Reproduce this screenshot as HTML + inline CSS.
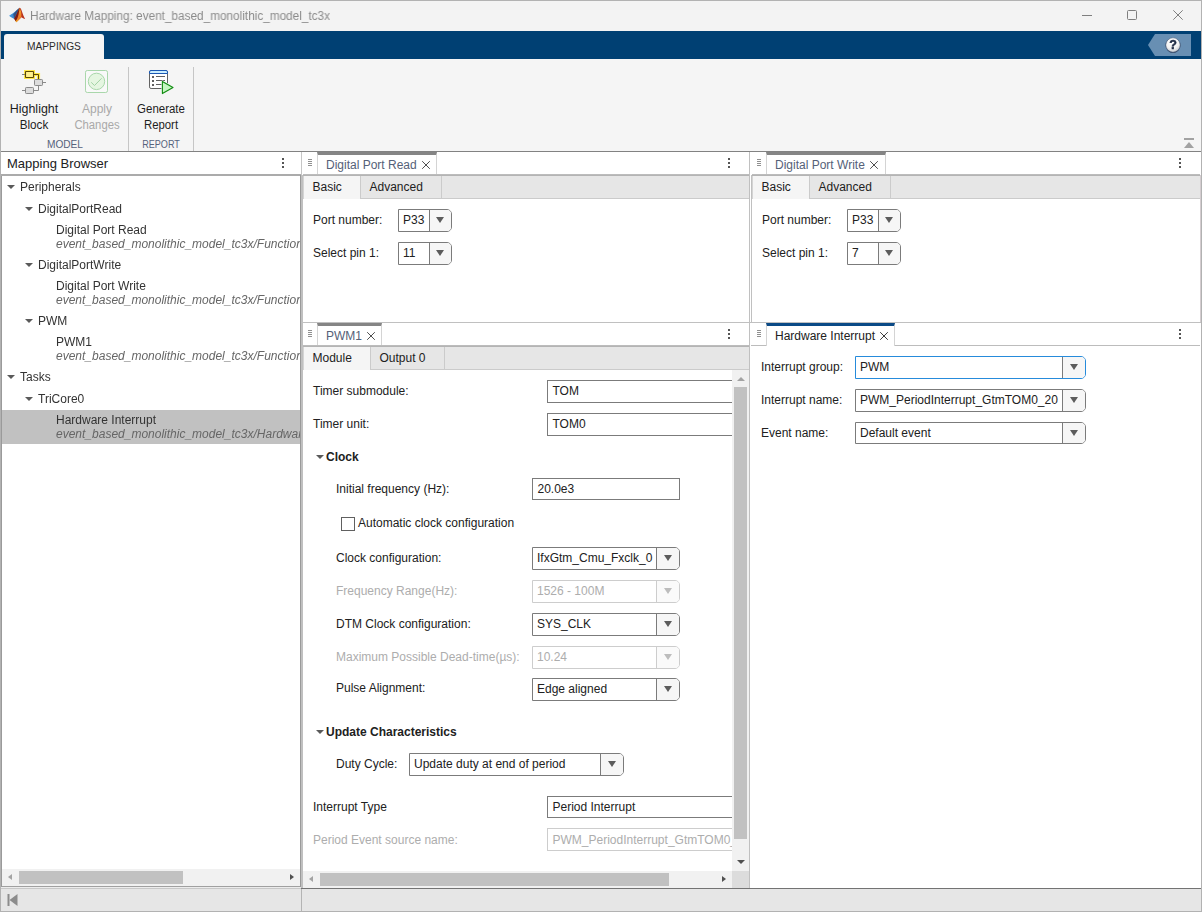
<!DOCTYPE html>
<html lang="en">
<head>
<meta charset="utf-8">
<title>Hardware Mapping: event_based_monolithic_model_tc3x</title>
<style>
*{box-sizing:border-box;margin:0;padding:0}
html,body{width:1202px;height:912px;overflow:hidden;background:#f3f3f3}
body{position:relative;font-family:"Liberation Sans",sans-serif;font-size:12px;color:#212121}
.a{position:absolute}
.t{position:absolute;white-space:nowrap;line-height:14px;font-size:12px}
.b{font-weight:bold}
#win{position:absolute;left:0;top:0;width:1202px;height:912px;border:1px solid #b2b2b2}
#blue{position:absolute;left:1px;top:31px;width:1200px;height:28px;background:#004073}
#maptab{position:absolute;left:4px;top:34px;width:100px;height:25px;background:#f5f5f5;border-radius:3px 3px 0 0}
#strip{position:absolute;left:1px;top:59px;width:1200px;height:92px;background:#f5f5f5}
#stripline{position:absolute;left:1px;top:151px;width:1200px;height:1px;background:#828282}
.vsep{position:absolute;width:1px;background:#c6c6c6;top:67px;height:84px}
.tl{position:absolute;white-space:nowrap;font-size:12px;line-height:16px;text-align:center;color:#1e1e1e}
.sec{position:absolute;white-space:nowrap;font-size:11px;line-height:14px;color:#56627c}
.tree .t{color:#333}
.tree .s{color:#666;font-style:italic}
.arr{position:absolute;width:0;height:0;border-left:4px solid transparent;border-right:4px solid transparent;border-top:4px solid #5a5a5a}
.combo{position:absolute;height:23px;border:1px solid #7b7b7b;border-radius:0 5px 5px 0;background:#fff;overflow:hidden}
.combo .btn{position:absolute;right:0;top:0;bottom:0;width:23px;background:#f6f6f6;border-left:1px solid #7b7b7b}
.combo .btn:after{content:"";position:absolute;right:7px;top:7px;border-left:4px solid transparent;border-right:4px solid transparent;border-top:6px solid #5c5c5c}
.combo.n .btn{width:22px}
.combo .v{position:absolute;left:4px;top:3px;line-height:14px;font-size:12px;white-space:nowrap;color:#212121}
.combo.dis{border-color:#cdcdcd}
.combo.dis .btn{border-left-color:#cdcdcd;background:#fafafa}
.combo.dis .btn:after{border-top-color:#bdbdbd}
.combo.dis .v{color:#adadad}
.combo.foc{border-color:#268bdb}
.edit{position:absolute;height:23px;border:1px solid #7b7b7b;background:#fff;overflow:hidden}
.edit .v{position:absolute;left:4.5px;top:3px;line-height:14px;font-size:12px;white-space:nowrap;color:#212121}
.edit.dis{border-color:#cdcdcd}
.edit.dis .v{color:#adadad}
.g{color:#adadad}
.kebab{position:absolute;width:2px;height:2px;background:#555;box-shadow:0 4px 0 #555,0 8px 0 #555}
.grip{position:absolute;width:4px;height:1px;background:#909090;box-shadow:0 2px 0 #909090,0 4px 0 #909090,0 6px 0 #909090}
.hdr{position:absolute;height:24px;background:#fff;border-bottom:1px solid #b4b4b4}
.dtab{position:absolute;background:#fff;border-left:1px solid #d4d4d4;border-right:1px solid #d4d4d4;border-top:3px solid #858585}
.dtab.act{border-top-color:#0b4a86}
.dtab .t{color:#556178;font-size:12px;top:3px;line-height:14px}
.dtab.act .t{color:#212121}
.x{position:absolute;width:8px;height:8px}
.subbar{position:absolute;height:23px;background:#e6e6e6;border-bottom:1px solid #cbcbcb}
.subtab{position:absolute;top:0;height:23px;border-right:1px solid #cbcbcb;font-size:12px;line-height:14px;white-space:nowrap;color:#212121}
.subtab span{position:absolute;top:4px}
.subtab.on{background:#f5f5f5}
.panel{position:absolute;background:#fff}
.sbt{position:absolute;background:#f1f1f1}
.sbh{position:absolute;background:#c1c1c1}
</style>
</head>
<body>
<div id="win"></div>
<svg class="a" style="left:4px;top:2px" width="30" height="26" viewBox="4 2 30 26">
<defs>
<linearGradient id="lgb" x1="0" y1="0" x2="1" y2="0"><stop offset="0" stop-color="#4a9be0"/><stop offset=".6" stop-color="#2f7fc6"/><stop offset="1" stop-color="#26466f"/></linearGradient>
<linearGradient id="lgo" x1="0" y1="0" x2="0" y2="1"><stop offset="0" stop-color="#c8501c"/><stop offset=".25" stop-color="#f0962a"/><stop offset=".7" stop-color="#ee7a2a"/><stop offset="1" stop-color="#f7b61c"/></linearGradient>
</defs>
<path d="M9.1 15.7 C11.6 14.4 14.2 12.5 17.6 9.3 L19.2 8 L17.8 14 L14.3 18.9 C12.5 18.2 10.7 16.9 9.1 15.7 Z" fill="url(#lgb)"/>
<path d="M14.2 18.8 C15.6 16.5 17.6 12.5 19.4 7.9 C20.1 7.5 20.9 8.6 21.6 10.5 C22.2 12.2 22.7 14 23.4 15.6 C23.9 16.9 24.5 18 25.1 18.9 C23.8 18.7 22.4 17.8 21.3 17.2 C19.9 18.6 18 20.7 16.4 22.3 C15.7 21.3 15 20 14.2 18.8 Z" fill="#b8321d"/>
<path d="M19.4 7.9 C20.2 8 20.9 10 21.2 12.5 C21.4 14.4 21.4 16 21.3 17.2 C19.9 18.6 18 20.7 16.4 22.3 L15.2 20.4 C17 17 18.5 12.3 19.4 7.9 Z" fill="url(#lgo)"/>
<path d="M14.2 18.8 C15.6 16.5 17.5 12.6 19.2 8.2 C19.5 12 18.2 17.4 15.8 21.3 Z" fill="#7d1c13"/>
<path d="M13.2 14.2 L17.6 9.6 L15.6 15.5 L14.4 18.6 Z" fill="#3a2a4a" opacity=".55"/>
</svg>
<div class="t " id="title" style="left:30px;top:9px;color:#8b8b8b;transform-origin:0 50%;transform:scaleX(.982);will-change:transform;">Hardware Mapping: event_based_monolithic_model_tc3x</div>
<svg class="a" style="left:1075px;top:5px" width="120" height="22" viewBox="0 0 120 22" fill="none" stroke="#7f7f7f" stroke-width="1">
<path d="M7 10.5 H17"/>
<rect x="52.5" y="5.5" width="9" height="9" rx="1"/>
<path d="M98.3 5.3 L107.7 14.7 M107.7 5.3 L98.3 14.7"/>
</svg>
<div id="blue"></div><div id="maptab"></div>
<div class="t " id="maptxt" style="left:27px;top:40px;font-size:11px;line-height:13px;color:#2b2b2b;transform-origin:0 50%;transform:scaleX(.928);">MAPPINGS</div>
<svg class="a" style="left:1147px;top:33px;will-change:transform" width="46" height="24" viewBox="0 0 46 24">
<defs><radialGradient id="hg" cx="45%" cy="30%" r="75%"><stop offset="0" stop-color="#ffffff"/><stop offset=".6" stop-color="#f2f2f2"/><stop offset="1" stop-color="#b9bec6"/></radialGradient></defs>
<path d="M1 12 L8 1 H44 V23 H8 Z" fill="#688fb3"/>
<circle cx="26" cy="12.5" r="7.5" fill="#2c405f"/>
<circle cx="26" cy="12" r="7.2" fill="url(#hg)" stroke="#4a5f7c" stroke-width=".5"/>
<text x="26" y="16.3" text-anchor="middle" font-family="Liberation Sans, sans-serif" font-weight="bold" font-size="12.5" fill="#1d2a44" stroke="#1d2a44" stroke-width=".5">?</text>
</svg>
<div id="strip"></div><div id="stripline"></div>
<div class="vsep" style="left:128px"></div><div class="vsep" style="left:193px"></div>
<svg class="a" style="left:20px;top:68px" width="28" height="28" viewBox="20 68 28 28" fill="none">
<rect x="24" y="70" width="11" height="9" fill="#ffe84a"/>
<path d="M34 74.5 H38.5 V79" stroke="#ffe84a" stroke-width="3.2"/>
<path d="M22 74.5 H25" stroke="#808080"/>
<path d="M34 74.5 H38.5 V79.5" stroke="#5c4700"/>
<rect x="25.5" y="71.5" width="8" height="6" rx=".6" fill="#fff08c" stroke="#5c4700" stroke-width="1.1"/>
<path d="M43 82.5 H46 M22 90.5 H25 M34 90.5 H38.5 V86" stroke="#8a8a8a"/>
<rect x="34.5" y="79.5" width="8" height="6" rx=".8" fill="#dcdcdc" stroke="#8a8a8a"/>
<rect x="25.5" y="87.5" width="8" height="6" rx=".8" fill="#dcdcdc" stroke="#8a8a8a"/>
</svg>
<svg class="a" style="left:84px;top:69px" width="26" height="26" viewBox="84 69 26 26" fill="none">
<rect x="85.5" y="70.5" width="22" height="22" rx="1.8" fill="#f9f9f9" stroke="#a9d7ab"/>
<circle cx="96.5" cy="81.4" r="8.2" fill="#e5f6e1" stroke="#a9d7ab"/>
<path d="M91.2 82.3 L94.5 85.5 L101.6 78.3" stroke="#a3d3a5" stroke-width="1"/>
</svg>
<svg class="a" style="left:147px;top:68px" width="30" height="28" viewBox="147 68 30 28" fill="none">
<rect x="149.5" y="70.5" width="18" height="18" rx="1.6" fill="#fff" stroke="#626262"/>
<path d="M149.5 73.5 V72 Q149.5 70.5 151 70.5 H166 Q167.5 70.5 167.5 72 V73.5 Z" fill="#c9edff" stroke="#1b58b3"/>
<path d="M152 77 H154 M152 81 H154 M152 85 H154" stroke="#606060" stroke-width="2"/>
<path d="M156 76.5 H165 M156 80.5 H165 M156 84.5 H162" stroke="#606060"/>
<path d="M162.4 81.4 L173 87.5 L162.4 93.6 Z" fill="#c6f6c2" stroke="#f5f5f5" stroke-width="2" stroke-linejoin="round"/>
<path d="M162.4 81.4 L173 87.5 L162.4 93.6 Z" fill="#c6f6c2" stroke="#118c11" stroke-width="1.1" stroke-linejoin="round"/>
</svg>
<div class="tl" id="tl1" style="left:-6px;width:80px;top:101px;color:#1e1e1e;transform:scaleX(1.038)">Highlight</div>
<div class="tl" id="tl2" style="left:-6px;width:80px;top:117px;color:#1e1e1e;transform:scaleX(0.976)">Block</div>
<div class="tl" id="tl3" style="left:57px;width:80px;top:101px;color:#a9a9a9;transform:scaleX(1.0)">Apply</div>
<div class="tl" id="tl4" style="left:57px;width:80px;top:117px;color:#a9a9a9;transform:scaleX(0.94)">Changes</div>
<div class="tl" id="tl5" style="left:121px;width:80px;top:101px;color:#1e1e1e;transform:scaleX(0.954)">Generate</div>
<div class="tl" id="tl6" style="left:121px;width:80px;top:117px;color:#1e1e1e;transform:scaleX(0.946)">Report</div>
<div class="sec" id="sec1" style="left:24.5px;width:80px;text-align:center;top:137px;transform:scaleX(.92)">MODEL</div>
<div class="sec" id="sec2" style="left:121px;width:80px;text-align:center;top:137px;transform:scaleX(.826)">REPORT</div>
<svg class="a" style="left:1182px;top:137px" width="13" height="12" viewBox="0 0 13 12"><rect x="2" y="1" width="10" height="2" fill="#a2a2a2"/><path d="M7 5 L12 11 H2 Z" fill="#a2a2a2"/></svg>
<!--PANELS-->
<div class="a" style="left:1px;top:152px;width:1200px;height:736px;background:#fff;"></div>
<div class="t " id="mb" style="left:7px;top:156px;font-size:13px;line-height:15px;color:#212121;">Mapping Browser</div>
<div class="kebab" style="left:282px;top:158px"></div>
<div class="a" style="left:1px;top:174px;width:300px;height:2px;background:#ababab;"></div>
<div class="a" style="left:1px;top:176px;width:1px;height:711px;background:#9a9a9a;"></div>
<div class="tree">
<div class="a" style="left:2px;top:176px;width:298px;height:693px;overflow:hidden;will-change:transform">
<div class="t" style="left:18px;top:4px">Peripherals</div>
<div class="arr" style="left:5px;top:9px"></div>
<div class="t" style="left:36px;top:26px">DigitalPortRead</div>
<div class="arr" style="left:23px;top:31px"></div>
<div class="t" style="left:54px;top:47px">Digital Port Read</div>
<div class="t s" style="left:54px;top:61px">event_based_monolithic_model_tc3x/Function-Call Subsystem/Digital Port Read</div>
<div class="t" style="left:36px;top:82px">DigitalPortWrite</div>
<div class="arr" style="left:23px;top:87px"></div>
<div class="t" style="left:54px;top:103px">Digital Port Write</div>
<div class="t s" style="left:54px;top:117px">event_based_monolithic_model_tc3x/Function-Call Subsystem/Digital Port Write</div>
<div class="t" style="left:36px;top:138px">PWM</div>
<div class="arr" style="left:23px;top:143px"></div>
<div class="t" style="left:54px;top:159px">PWM1</div>
<div class="t s" style="left:54px;top:173px">event_based_monolithic_model_tc3x/Function-Call Subsystem/PWM1</div>
<div class="t" style="left:18px;top:194px">Tasks</div>
<div class="arr" style="left:5px;top:199px"></div>
<div class="t" style="left:36px;top:216px">TriCore0</div>
<div class="arr" style="left:23px;top:221px"></div>
<div class="a" style="left:0;top:234px;width:298px;height:34px;background:#c1c1c1"></div>
<div class="t" style="left:54px;top:237px">Hardware Interrupt</div>
<div class="t s" style="left:54px;top:251px">event_based_monolithic_model_tc3x/Hardware Interrupt</div>
</div></div>
<div class="a" style="left:2px;top:869px;width:298px;height:17px;background:#f1f1f1;"></div>
<div class="a" style="left:19px;top:871px;width:164px;height:13px;background:#c1c1c1;"></div>
<div class="a" style="left:8px;top:874px;border-top:3.5px solid transparent;border-bottom:3.5px solid transparent;border-right:4px solid #a3a3a3"></div>
<div class="a" style="left:290px;top:874px;border-top:3.5px solid transparent;border-bottom:3.5px solid transparent;border-left:4px solid #505050"></div>
<div class="a" style="left:300px;top:175px;width:1px;height:712px;background:#9a9a9a;"></div>
<div class="a" style="left:301px;top:152px;width:1px;height:23px;background:#c6c6c6;"></div>
<div class="a" style="left:301px;top:175px;width:2px;height:713px;background:#c0c0c0;"></div>
<div class="a" style="left:303px;top:174px;width:446px;height:1px;background:#bcbcbc;"></div>
<div class="a" style="left:303px;top:175px;width:446px;height:1px;background:#b4b4b4;"></div>
<div class="grip" style="left:308px;top:159px"></div>
<div class="dtab" style="left:317px;top:152px;width:120px;height:22px"><div class="t" id="dt1" style="left:8px">Digital Port Read</div></div>
<svg class="x" style="left:422px;top:161px" viewBox="0 0 8 8"><path d="M.2 .2 L7.8 7.8 M7.8 .2 L.2 7.8" stroke="#4f4f4f" stroke-width="1" fill="none"/></svg>
<div class="kebab" style="left:728px;top:158px"></div>
<div class="a" style="left:303px;top:176px;width:1px;height:23px;background:#d4d4d4;"></div>
<div class="subbar" style="left:304px;top:176px;width:445px">
<div class="subtab on" style="left:0px;width:57px"><span style="left:8.5px">Basic</span></div>
<div class="subtab" style="left:57px;width:81px"><span style="left:8.5px">Advanced</span></div>
</div>
<div class="t " style="left:313px;top:213px;">Port number:</div>
<div class="combo n" style="left:398px;top:209px;width:54px;height:23px"><div class="v">P33</div><div class="btn"></div></div>
<div class="t " style="left:313px;top:246px;">Select pin 1:</div>
<div class="combo n" style="left:398px;top:242px;width:54px;height:23px"><div class="v">11</div><div class="btn"></div></div>
<div class="a" style="left:749px;top:152px;width:1px;height:736px;background:#c0c0c0;"></div>
<div class="a" style="left:751px;top:175px;width:1px;height:147px;background:#c0c0c0;"></div>
<div class="a" style="left:1200px;top:175px;width:1px;height:147px;background:#d4cdd0;"></div>
<div class="a" style="left:303px;top:322px;width:898px;height:1px;background:#c0c0c0;"></div>
<div class="a" style="left:752px;top:174px;width:448px;height:1px;background:#bcbcbc;"></div>
<div class="a" style="left:752px;top:175px;width:448px;height:1px;background:#b4b4b4;"></div>
<div class="grip" style="left:757px;top:159px"></div>
<div class="dtab" style="left:766px;top:152px;width:120px;height:22px"><div class="t" id="dt2" style="left:8px">Digital Port Write</div></div>
<svg class="x" style="left:870px;top:161px" viewBox="0 0 8 8"><path d="M.2 .2 L7.8 7.8 M7.8 .2 L.2 7.8" stroke="#4f4f4f" stroke-width="1" fill="none"/></svg>
<div class="kebab" style="left:1179px;top:158px"></div>
<div class="a" style="left:752px;top:176px;width:1px;height:23px;background:#d4d4d4;"></div>
<div class="subbar" style="left:753px;top:176px;width:447px">
<div class="subtab on" style="left:0px;width:57px"><span style="left:8.5px">Basic</span></div>
<div class="subtab" style="left:57px;width:81px"><span style="left:8.5px">Advanced</span></div>
</div>
<div class="t " style="left:762px;top:213px;">Port number:</div>
<div class="combo n" style="left:847px;top:209px;width:54px;height:23px"><div class="v">P33</div><div class="btn"></div></div>
<div class="t " style="left:762px;top:246px;">Select pin 1:</div>
<div class="combo n" style="left:847px;top:242px;width:54px;height:23px"><div class="v">7</div><div class="btn"></div></div>
<div class="a" style="left:303px;top:345px;width:446px;height:1px;background:#bcbcbc;"></div>
<div class="a" style="left:303px;top:346px;width:446px;height:1px;background:#b4b4b4;"></div>
<div class="grip" style="left:308px;top:330px"></div>
<div class="dtab" style="left:317px;top:323px;width:65px;height:22px"><div class="t" id="dt3" style="left:8px">PWM1</div></div>
<svg class="x" style="left:367px;top:332px" viewBox="0 0 8 8"><path d="M.2 .2 L7.8 7.8 M7.8 .2 L.2 7.8" stroke="#4f4f4f" stroke-width="1" fill="none"/></svg>
<div class="kebab" style="left:728px;top:329px"></div>
<div class="a" style="left:303px;top:347px;width:1px;height:23px;background:#d4d4d4;"></div>
<div class="subbar" style="left:304px;top:347px;width:445px">
<div class="subtab on" style="left:0px;width:67px"><span style="left:8.5px">Module</span></div>
<div class="subtab" style="left:67px;width:74px"><span style="left:8.5px">Output 0</span></div>
</div>
<div class="a" style="left:303px;top:370px;width:429px;height:501px;overflow:hidden">
<div class="t " style="left:10px;top:14px;">Timer submodule:</div>
<div class="edit " style="left:244px;top:10px;width:230px;height:23px"><div class="v" style="top:3px">TOM</div></div>
<div class="t " style="left:10px;top:47px;">Timer unit:</div>
<div class="edit " style="left:244px;top:43px;width:230px;height:23px"><div class="v" style="top:3px">TOM0</div></div>
<div class="arr" style="left:13px;top:85px"></div>
<div class="t b" style="left:23px;top:80px;">Clock</div>
<div class="t " style="left:33px;top:112px;">Initial frequency (Hz):</div>
<div class="edit " style="left:229px;top:108px;width:148px;height:22px"><div class="v" style="top:3px">20.0e3</div></div>
<div class="a" style="left:38px;top:147px;width:14px;height:14px;border:1px solid #606060;background:#fff"></div>
<div class="t " style="left:55px;top:146px;">Automatic clock configuration</div>
<div class="t " style="left:33px;top:181px;">Clock configuration:</div>
<div class="combo " style="left:229px;top:177px;width:148px"><div class="v">IfxGtm_Cmu_Fxclk_0</div><div class="btn"></div></div>
<div class="t g" style="left:33px;top:214px;">Frequency Range(Hz):</div>
<div class="combo dis" style="left:229px;top:210px;width:148px"><div class="v">1526 - 100M</div><div class="btn"></div></div>
<div class="t " style="left:33px;top:247px;">DTM Clock configuration:</div>
<div class="combo " style="left:229px;top:243px;width:148px"><div class="v">SYS_CLK</div><div class="btn"></div></div>
<div class="t g" style="left:33px;top:280px;">Maximum Possible Dead-time(µs):</div>
<div class="combo dis" style="left:229px;top:276px;width:148px"><div class="v">10.24</div><div class="btn"></div></div>
<div class="t " style="left:33px;top:311px;">Pulse Alignment:</div>
<div class="combo " style="left:229px;top:308px;width:148px"><div class="v">Edge aligned</div><div class="btn"></div></div>
<div class="arr" style="left:13px;top:360px"></div>
<div class="t b" style="left:23px;top:355px;">Update Characteristics</div>
<div class="t " style="left:33px;top:387px;">Duty Cycle:</div>
<div class="combo " style="left:106px;top:383px;width:215px"><div class="v">Update duty at end of period</div><div class="btn"></div></div>
<div class="t " style="left:10px;top:430px;">Interrupt Type</div>
<div class="edit " style="left:244px;top:426px;width:230px;height:22px"><div class="v" style="top:3px">Period Interrupt</div></div>
<div class="t g" style="left:10px;top:463px;">Period Event source name:</div>
<div class="edit dis" style="left:244px;top:458px;width:230px;height:23px"><div class="v" style="top:4px">PWM_PeriodInterrupt_GtmTOM0_20</div></div>
</div>
<div class="a" style="left:732px;top:370px;width:17px;height:501px;background:#f1f1f1;"></div>
<div class="a" style="left:734px;top:387px;width:13px;height:452px;background:#c1c1c1;"></div>
<div class="a" style="left:736.5px;top:377px;border-left:4px solid transparent;border-right:4px solid transparent;border-bottom:4px solid #a3a3a3"></div>
<div class="a" style="left:736.5px;top:860px;border-left:4px solid transparent;border-right:4px solid transparent;border-top:4px solid #505050"></div>
<div class="a" style="left:303px;top:871px;width:429px;height:17px;background:#f1f1f1;"></div>
<div class="a" style="left:732px;top:871px;width:17px;height:17px;background:#dcdcdc;"></div>
<div class="a" style="left:320px;top:873px;width:349px;height:13px;background:#c1c1c1;"></div>
<div class="a" style="left:309px;top:876px;border-top:3.5px solid transparent;border-bottom:3.5px solid transparent;border-right:4px solid #a3a3a3"></div>
<div class="a" style="left:722px;top:876px;border-top:3.5px solid transparent;border-bottom:3.5px solid transparent;border-left:4px solid #505050"></div>
<div class="a" style="left:752px;top:345px;width:448px;height:1px;background:#bcbcbc;"></div>
<div class="grip" style="left:757px;top:330px"></div>
<div class="dtab act" style="left:766px;top:323px;width:129px;height:23px"><div class="t" id="dt4" style="left:8px">Hardware Interrupt</div></div>
<svg class="x" style="left:880px;top:332px" viewBox="0 0 8 8"><path d="M.2 .2 L7.8 7.8 M7.8 .2 L.2 7.8" stroke="#3c3c3c" stroke-width="1" fill="none"/></svg>
<div class="kebab" style="left:1179px;top:329px"></div>
<div class="a" style="left:751px;top:345px;width:1px;height:1px;background:#bcbcbc;"></div>
<div class="t " style="left:761px;top:360px;">Interrupt group:</div>
<div class="combo foc" style="left:855px;top:356px;width:231px;height:23px"><div class="v">PWM</div><div class="btn"></div></div>
<div class="t " style="left:761px;top:393px;">Interrupt name:</div>
<div class="combo " style="left:855px;top:389px;width:231px;height:23px"><div class="v">PWM_PeriodInterrupt_GtmTOM0_20</div><div class="btn"></div></div>
<div class="t " style="left:761px;top:426px;">Event name:</div>
<div class="combo " style="left:855px;top:422px;width:231px;height:22px"><div class="v">Default event</div><div class="btn"></div></div>
<div class="a" style="left:2px;top:886px;width:298px;height:1px;background:#a0a0a0;"></div>
<div class="a" style="left:1px;top:887px;width:300px;height:1px;background:#ececec;"></div>
<div class="a" style="left:1px;top:888px;width:300px;height:1px;background:#c8c8c8;"></div>
<div class="a" style="left:301px;top:888px;width:900px;height:1px;background:#737373;"></div>
<div class="a" style="left:1px;top:889px;width:1200px;height:22px;background:#e6e6e6;"></div>
<div class="a" style="left:301px;top:889px;width:1px;height:22px;background:#b4b4b4;"></div>
<svg class="a" style="left:7px;top:894px" width="11" height="12" viewBox="0 0 11 12"><rect x=".5" y="0" width="2" height="12" fill="#8c8c8c"/><path d="M10.5 0 V12 L2.5 6 Z" fill="#8c8c8c"/></svg>
</body>
</html>
